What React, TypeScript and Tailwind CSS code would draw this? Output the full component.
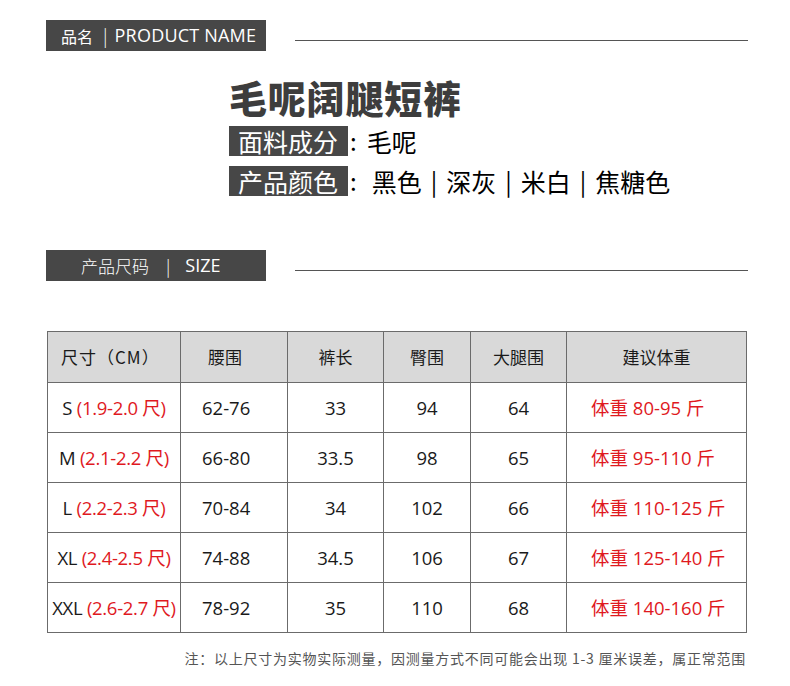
import React from "react"

const font = { fontFamily: '"Noto Sans CJK SC", "Open Sans", sans-serif' }
const latin = { fontFamily: '"Open Sans", "Noto Sans CJK SC", sans-serif' }

const rows = [
  { size: "S", chi: "(1.9-2.0 尺)", waist: "62-76", len: "33", hip: "94", thigh: "64", weight: "体重 80-95 斤" },
  { size: "M", chi: "(2.1-2.2 尺)", waist: "66-80", len: "33.5", hip: "98", thigh: "65", weight: "体重 95-110 斤" },
  { size: "L", chi: "(2.2-2.3 尺)", waist: "70-84", len: "34", hip: "102", thigh: "66", weight: "体重 110-125 斤" },
  { size: "XL", chi: "(2.4-2.5 尺)", waist: "74-88", len: "34.5", hip: "106", thigh: "67", weight: "体重 125-140 斤" },
  { size: "XXL", chi: "(2.6-2.7 尺)", waist: "78-92", len: "35", hip: "110", thigh: "68", weight: "体重 140-160 斤" },
]

function SectionHeader({ children, pad }: { children: React.ReactNode; pad: string }) {
  return (
    <div className="flex items-end">
      <div className={`w-[220px] h-[31px] bg-[#474747] text-white flex items-center ${pad}`}>
        {children}
      </div>
      <div className="ml-[29px] w-[453px] h-px bg-[#555] mb-[10px]" />
    </div>
  )
}

function Sep() {
  return <span className="text-[24px] leading-[30px] text-black mx-[9px]">|</span>
}

export default function App() {
  return (
    <div className="w-[790px] h-[686px] bg-white text-[#222] overflow-hidden" style={font}>
      <div className="pl-[46px] pt-[20px]">
        <SectionHeader pad="pl-[15px]">
          <span className="text-[16px]">品名</span>
          <span className="ml-[10px] mr-[7px] text-[18px] font-light">|</span>
          <span className="text-[18px] tracking-[0.2px]" style={latin}>PRODUCT NAME</span>
        </SectionHeader>

        {/* 产品信息 */}
        <div className="pl-[183px] mt-[24px]">
          <h1 className="text-[38px] leading-[44px] font-black text-[#3d3d3d] tracking-[0.8px]">毛呢阔腿短裤</h1>
          <div className="flex items-center mt-[7px] h-[30px]">
            <span className="bg-[#474747] text-white text-[25px] leading-[30px] pl-[9px] pr-[10px]">面料成分</span>
            <span className="text-[24px] leading-[30px] text-black ml-[2px]">:</span>
            <span className="text-[25px] leading-[30px] text-black ml-[10px]">毛呢</span>
          </div>
          <div className="flex items-center mt-[10px] h-[30px]">
            <span className="bg-[#474747] text-white text-[25px] leading-[30px] pl-[9px] pr-[10px]">产品颜色</span>
            <span className="text-[24px] leading-[30px] text-black ml-[2px]">:</span>
            <span className="text-[25px] leading-[30px] text-black ml-[15px]">黑色</span>
            <Sep />
            <span className="text-[25px] leading-[30px] text-black">深灰</span>
            <Sep />
            <span className="text-[25px] leading-[30px] text-black">米白</span>
            <Sep />
            <span className="text-[25px] leading-[30px] text-black">焦糖色</span>
          </div>
        </div>

        <div className="mt-[54px]">
          <SectionHeader pad="pl-[35px]">
            <span className="text-[17px] font-light">产品尺码</span>
            <span className="ml-[17px] mr-[15px] text-[17px] font-light">|</span>
            <span className="text-[18px]" style={latin}>SIZE</span>
          </SectionHeader>
        </div>

        {/* 尺码表 */}
        <table className="mt-[50px] ml-px border-collapse table-fixed text-[#1a1a1a]">
          <colgroup>
            <col className="w-[133px]" />
            <col className="w-[107px]" />
            <col className="w-[96px]" />
            <col className="w-[87px]" />
            <col className="w-[96px]" />
            <col className="w-[180px]" />
          </colgroup>
          <thead>
            <tr className="h-[51px] bg-[#d9d9d9] text-[17px]">
              <th className="border border-[#6b6b6b] font-normal text-left pl-[13px] tracking-[1px]">尺寸（CM）</th>
              <th className="border border-[#6b6b6b] font-normal text-left pl-[27px]">腰围</th>
              <th className="border border-[#6b6b6b] font-normal">裤长</th>
              <th className="border border-[#6b6b6b] font-normal">臀围</th>
              <th className="border border-[#6b6b6b] font-normal">大腿围</th>
              <th className="border border-[#6b6b6b] font-normal">建议体重</th>
            </tr>
          </thead>
          <tbody style={latin} className="text-[18.5px]">
            {rows.map(r => (
              <tr key={r.size} className="h-[50px]">
                <td className="border border-[#6b6b6b] text-center whitespace-nowrap tracking-[-0.3px]">
                  {r.size} <span className="text-[#e0191e]">{r.chi}</span>
                </td>
                <td className="border border-[#6b6b6b] text-left pl-[21px]">{r.waist}</td>
                <td className="border border-[#6b6b6b] text-center">{r.len}</td>
                <td className="border border-[#6b6b6b] text-center">{r.hip}</td>
                <td className="border border-[#6b6b6b] text-center">{r.thigh}</td>
                <td className="border border-[#6b6b6b] text-left text-[#e0191e] pl-[24px]">{r.weight}</td>
              </tr>
            ))}
          </tbody>
        </table>

        <p className="mt-[15px] w-[700px] text-right text-[14px] tracking-[0.75px] text-[#555]">
          注：以上尺寸为实物实际测量，因测量方式不同可能会出现 1-3 厘米误差，属正常范围
        </p>
      </div>
    </div>
  )
}
